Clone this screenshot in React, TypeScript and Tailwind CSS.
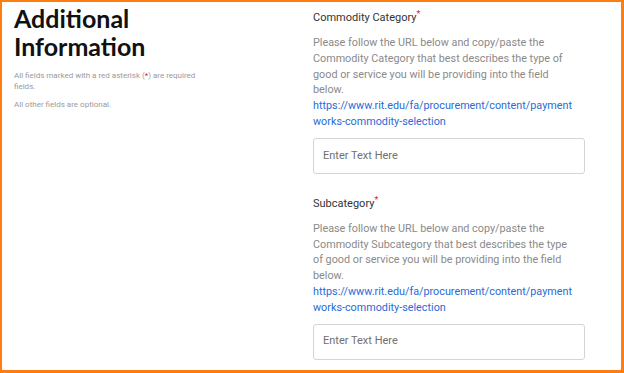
import React from "react";

function Field({ label, lines }: { label: string; lines: string[] }) {
  return (
    <div className="flex flex-col">
      <div className="text-[11px] leading-[14px] text-[#333]">
        {label}
        <span className="relative -top-[4px] text-[9px] text-[#e02424]">*</span>
      </div>
      <div className="mt-[10px] text-[10.8px] leading-[15.8px] text-[#8a8a8a]">
        {lines.map((l, i) => (
          <div key={i}>{l}</div>
        ))}
        <div className="text-[#2a6ad6]">https://www.rit.edu/fa/procurement/content/payment</div>
        <div className="text-[#2a6ad6]">works-commodity-selection</div>
      </div>
      <div className="mt-[8px] h-[36px] w-[272px] rounded-[3px] border border-[#d4d4d4] flex items-center px-[9px] text-[11px] text-[#707070]">
        Enter Text Here
      </div>
    </div>
  );
}

export default function App() {
  return (
    <div
      className="w-[624px] h-[373px] bg-white border-[#ff7c10] border-l-2 border-t-2 border-r-[3px] border-b-[3px] overflow-hidden"
      style={{ fontFamily: "Roboto, 'Liberation Sans', sans-serif" }}
    >
      <div className="flex">
        <div className="w-[311px] pl-[12px] pt-[2px]">
          <h1
            className="text-[25px] leading-[28px] font-bold text-[#111]"
            style={{ fontFamily: "Lato, 'Liberation Sans', sans-serif" }}
          >
            Additional
            <br />
            Information
          </h1>
          <p className="mt-[10px] text-[8px] leading-[11px] text-[#9a9a9a] w-[200px]">
            All fields marked with a red asterisk (<span className="text-[#e02424]">*</span>) are required fields.
          </p>
          <p className="mt-[7px] text-[8px] leading-[11px] text-[#9a9a9a]">All other fields are optional.</p>
        </div>
        <div className="flex flex-col gap-[23px] pt-[9px]">
          <Field
            label="Commodity Category"
            lines={[
              "Please follow the URL below and copy/paste the",
              "Commodity Category that best describes the type of",
              "good or service you will be providing into the field",
              "below.",
            ]}
          />
          <Field
            label="Subcategory"
            lines={[
              "Please follow the URL below and copy/paste the",
              "Commodity Subcategory that best describes the type",
              "of good or service you will be providing into the field",
              "below.",
            ]}
          />
        </div>
      </div>
    </div>
  );
}
